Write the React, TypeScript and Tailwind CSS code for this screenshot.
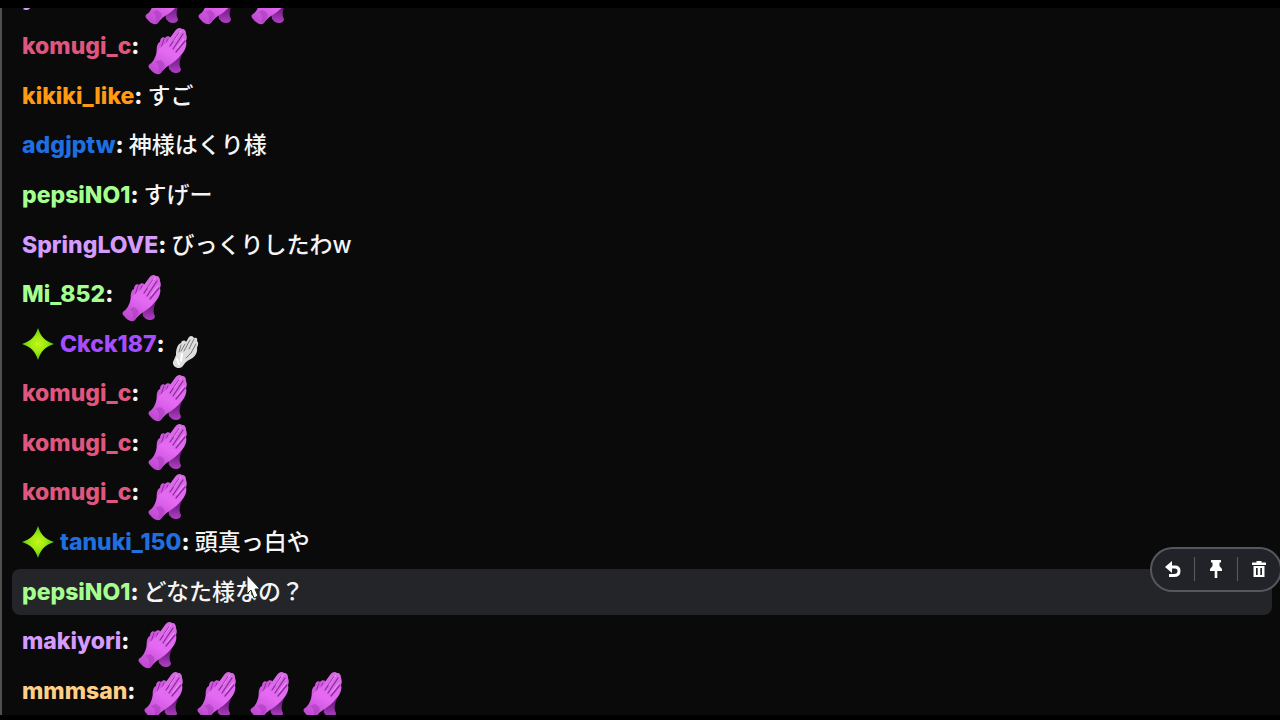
type Message = {
  name: string;
  color: string;
  badge?: boolean;
  text?: string;
  emotes?: number;
  clap?: boolean;
  active?: boolean;
};

const messages: Message[] = [
  { name: "y", color: "inline-block min-w-[106px] text-[#d59bff]", emotes: 3 },
  { name: "komugi_c", color: "text-[#e0567f]", emotes: 1 },
  { name: "kikiki_like", color: "text-[#ff9a12]", text: "すご" },
  { name: "adgjptw", color: "text-[#1f6fe0]", text: "神様はくり様" },
  { name: "pepsiNO1", color: "text-[#a5ff8f]", text: "すげー" },
  { name: "SpringLOVE", color: "text-[#d59bff]", text: "びっくりしたわw" },
  { name: "Mi_852", color: "text-[#a5ff8f]", emotes: 1 },
  { name: "Ckck187", color: "text-[#a64dff]", badge: true, clap: true },
  { name: "komugi_c", color: "text-[#e0567f]", emotes: 1 },
  { name: "komugi_c", color: "text-[#e0567f]", emotes: 1 },
  { name: "komugi_c", color: "text-[#e0567f]", emotes: 1 },
  { name: "tanuki_150", color: "text-[#1f6fe0]", badge: true, text: "頭真っ白や" },
  { name: "pepsiNO1", color: "text-[#a5ff8f]", text: "どなた様なの？", active: true },
  { name: "makiyori", color: "text-[#d59bff]", emotes: 1 },
  { name: "mmmsan", color: "text-[#ffcf85]", emotes: 4 },
];

const HandsEmote = () => (
  <svg viewBox="0 0 48 48" className="relative top-1 h-12 w-12 shrink-0" role="img" aria-label="pray">
    <defs>
      <linearGradient id="glove" x1="0.8" y1="0" x2="0.3" y2="1">
        <stop offset="0" stopColor="#d868e4" />
        <stop offset="0.55" stopColor="#e56af3" />
        <stop offset="1" stopColor="#c04ad2" />
      </linearGradient>
      <linearGradient id="cuff" x1="0" y1="0" x2="0" y2="1">
        <stop offset="0" stopColor="#5f1670" />
        <stop offset="1" stopColor="#b23fc6" />
      </linearGradient>
    </defs>
    <path d="M24 35 L38 28 C35 34 35 39 37 42 C37 46 32 47 28 45 L25 42Z" fill="url(#cuff)" />
    {/* back hand */}
    <path d="M13 28 C12 21 13 16 16 15 C16 11 19 9 21 11 C23 8 27 9 27 12 L24 24Z" fill="#cf58de" />
    <path d="M20 12 L17 21 M24 12 L20 21" fill="none" stroke="#8f2ca2" strokeWidth="1" strokeLinecap="round" />
    {/* front hand */}
    <path d="M13 24 C16 20 20 18 23 15 L31 4 C33 1 36 0 38 2 C41 2 42 4 42 7 C43 9 43 12 42 14 C43 18 42 22 38 27 C34 32 29 36 24 39 C21 41 19 43 17 46 C14 49 9 46 6 42 C4 40 4 38 6 37 C9 35 11 32 13 24Z" fill="url(#glove)" />
    <path d="M35 6 L26 19 M39 7 L29 22 M41 14 L32 25" fill="none" stroke="#8a2a9d" strokeWidth="1.3" strokeLinecap="round" />
    <path d="M37 4 L30 14 M40 12 L33 21" fill="none" stroke="#f5a2ff" strokeWidth="0.8" strokeLinecap="round" />
    <path d="M16 33 C21 36 22 38 19 42 C18 45 16 46 14 46 C16 41 15 37 11 35Z" fill="#a83aba" opacity="0.55" />
  </svg>
);

const ClapEmote = () => (
  <svg viewBox="0 0 28 36" className="relative top-2 ml-0.5 h-9 w-7 shrink-0" role="img" aria-label="clap">
    <path d="M4 21 C4 14 6 10 9 9 C10 6 13 6 14 8 L17 3 C19 1 21 2 22 4 C24 3 26 4 25 7 C27 9 26 11 25 14 C26 19 22 24 17 26 C13 28 12 31 10 33 C6 36 0 32 1 28Z" fill="#dedede" />
    <path d="M18 6 L12 17 M22 5 L17 15 M24 10 L19 19 M9 11 L7 18 M13 10 L9 17 M19 19 L14 24" fill="none" stroke="#777" strokeWidth="1" strokeLinecap="round" />
    <path d="M5 25 L7 30 M10 20 L9 27" fill="none" stroke="#fff" strokeWidth="2" strokeLinecap="round" />
  </svg>
);

const SparkBadge = () => (
  <svg viewBox="0 0 32 32" className="mr-1.5 h-8 w-8 shrink-0" role="img" aria-label="badge">
    <defs>
      <radialGradient id="spark">
        <stop offset="0" stopColor="#c8f51a" />
        <stop offset="0.5" stopColor="#9cea10" />
        <stop offset="1" stopColor="#4fc413" />
      </radialGradient>
    </defs>
    <path d="M16 0 C19 9 23 13 32 16 C23 19 19 23 16 32 C13 23 9 19 0 16 C9 13 13 9 16 0Z" fill="url(#spark)" />
  </svg>
);

const Toolbar = () => (
  <div className="absolute -top-[22px] -right-2.5 flex h-[45px] items-center rounded-full border-2 border-[#56575c] bg-[#222328] text-white">
    <button type="button" aria-label="Reply" className="flex w-[42px] justify-center">
      <svg viewBox="0 0 18 18" className="h-[18px] w-[18px]">
        <path d="M1 7 L8 1 V13Z" fill="currentColor" />
        <path d="M6 7 H11 C14 7 15 9 15 11 C15 14 13 15.500 10 15.500 H5" fill="none" stroke="currentColor" strokeWidth="3" />
      </svg>
    </button>
    <span className="h-6 w-px bg-[#5a5a60]" />
    <button type="button" aria-label="Pin" className="flex w-[42px] justify-center">
      <svg viewBox="0 0 14 20" className="h-5 w-3.5" fill="currentColor">
        <path d="M2 1 H12 V3.500 H10.500 V7 L13 10 V12 H8.300 V19 H5.700 V12 H1 V10 L3.500 7 V3.500 H2Z" />
      </svg>
    </button>
    <span className="h-6 w-px bg-[#5a5a60]" />
    <button type="button" aria-label="Delete" className="flex w-[42px] justify-center">
      <svg viewBox="0 0 16 18" className="h-[18px] w-4" fill="currentColor">
        <path fillRule="evenodd" d="M5.500 1 H10.500 V2.500 H15 V5 H1 V2.500 H5.500Z M2.500 6 H13.500 V17 H2.500Z M5 8 V15 H6.700 V8Z M9.300 8 V15 H11 V8Z" />
      </svg>
    </button>
  </div>
);

const ChatRow = ({ message }: { message: Message }) => (
  <li className={`relative flex h-[46px] shrink-0 items-center rounded-lg px-[10px] ${message.active ? "bg-[#242529]" : ""}`}>
    {message.badge && <SparkBadge />}
    <span className={`font-extrabold ${message.color}`}>{message.name}</span>
    <span className="mr-[5px] font-extrabold">:</span>
    {message.text && <span className="font-medium">{message.text}</span>}
    {message.emotes && (
      <span className="flex gap-[5px]">
        {Array.from({ length: message.emotes }, (_, i) => (
          <HandsEmote key={i} />
        ))}
      </span>
    )}
    {message.clap && <ClapEmote />}
    {message.active && <Toolbar />}
  </li>
);

const Cursor = () => (
  <svg viewBox="0 0 16 26" className="pointer-events-none absolute top-[574px] left-[246px] h-[26px] w-4" aria-hidden="true">
    <path d="M1 1 V20 L5 16 L8 24 L12 22 L9 15 H14Z" fill="#fff" stroke="#222" strokeWidth="1" />
  </svg>
);

export default function App() {
  return (
    <main className="relative flex h-screen flex-col overflow-hidden bg-black pt-2 pb-[5px] font-['Inter','Noto_Sans_CJK_JP',sans-serif] text-[23px] text-[#f5f5f7]">
      <section className="flex min-h-0 flex-1 flex-col overflow-hidden border-l-2 border-[#505050] bg-[#0a0a0a] pr-2 pb-px pl-[10px]">
        <ul className="-mt-[34px] flex flex-1 flex-col justify-between">
          {messages.map((message, i) => (
            <ChatRow key={i} message={message} />
          ))}
        </ul>
      </section>
      <Cursor />
    </main>
  );
}
